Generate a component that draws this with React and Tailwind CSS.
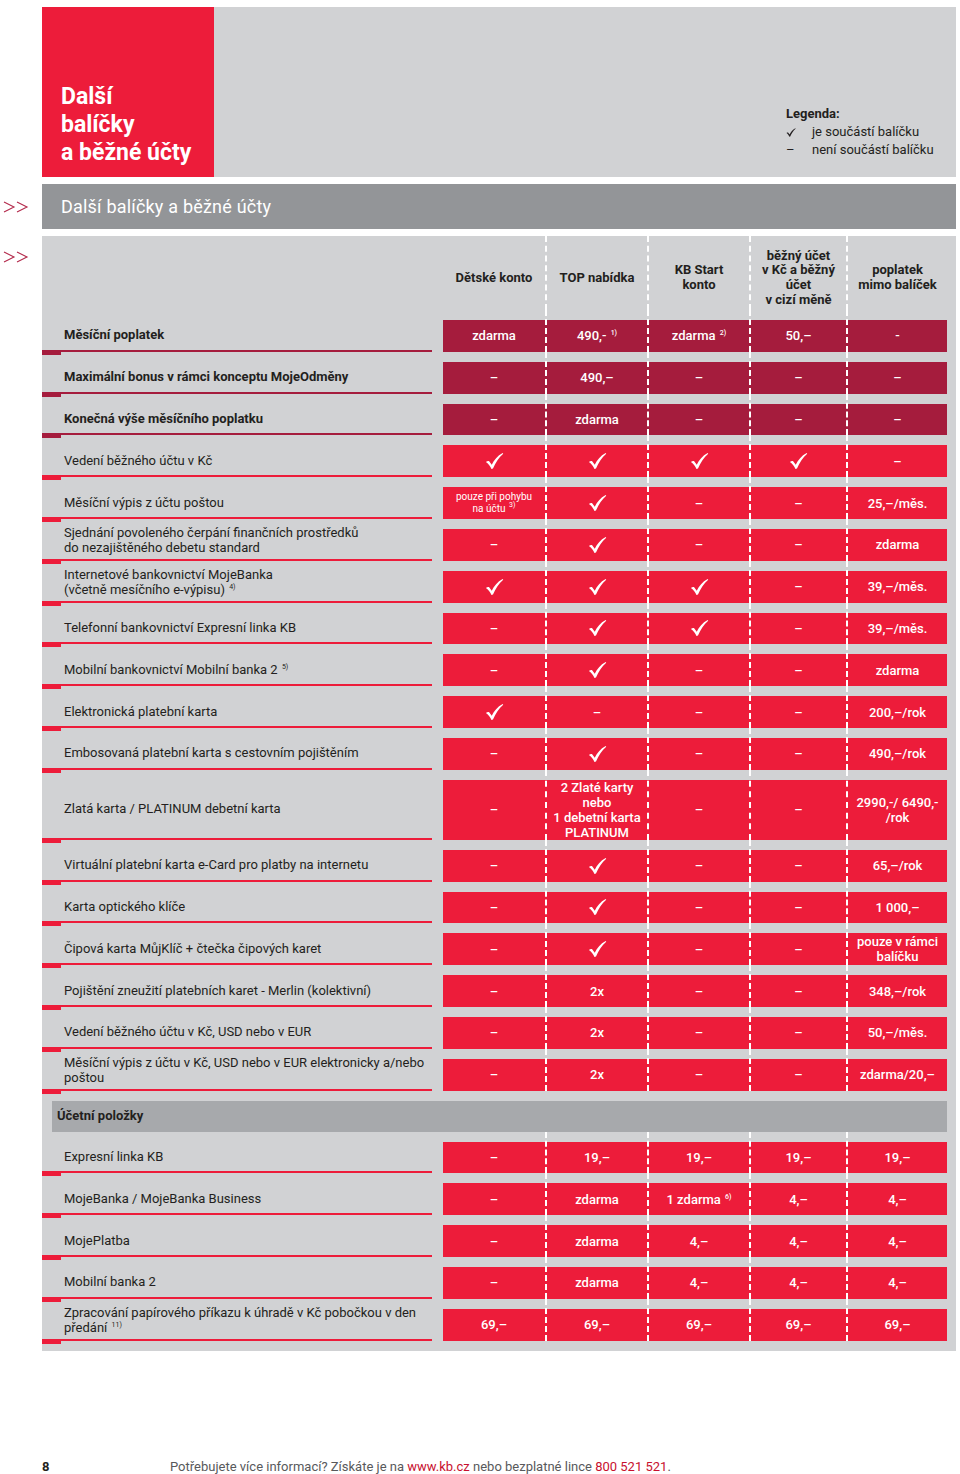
const DARK = "bg-[linear-gradient(to_bottom,transparent_10px,#a51c3d_10px)]";
const BRIGHT = "bg-[linear-gradient(to_bottom,transparent_10px,#ed1c3a_10px)]";

const Sup = ({ children }) => (
  <span className="text-[7px] leading-none ml-[1px] align-baseline relative -top-[5px]">{children}</span>
);

function Check({ className = "w-[19px] h-[18px]", color = "#ffffff" }) {
  return (
    <svg viewBox="0 0 20 18" className={className}>
      <path
        d="M1,10 C2.5,9 3.6,8.8 4.6,9.6 L7.1,13 C9.6,8 13,3.6 18.6,0.6 L19.2,1.3 C14.6,5.2 11.2,10.2 8.4,17 L6.8,17.3 C5.6,14.6 3.8,12 1,10 Z"
        fill={color}
      />
    </svg>
  );
}

function Chevrons() {
  return (
    <svg viewBox="0 0 26 12" className="w-[26px] h-[12px]">
      <polyline points="1,1 11,6 1,11" fill="none" stroke="#b3294b" strokeWidth="1.1" />
      <polyline points="14,1 24,6 14,11" fill="none" stroke="#b3294b" strokeWidth="1.1" />
    </svg>
  );
}

const V = "check";

const rows = [
  { label: "Měsíční poplatek", bold: true, dark: true, vals: ["zdarma", ["490,- ", "1)"], ["zdarma ", "2)"], "50,–", "-"] },
  { label: "Maximální bonus v rámci konceptu MojeOdměny", bold: true, dark: true, vals: ["–", "490,–", "–", "–", "–"] },
  { label: "Konečná výše měsíčního poplatku", bold: true, dark: true, vals: ["–", "zdarma", "–", "–", "–"] },
  { label: "Vedení běžného účtu v Kč", vals: [V, V, V, V, "–"] },
  { label: "Měsíční výpis z účtu poštou", vals: ["small", V, "–", "–", "25,–/měs."] },
  { label: "Sjednání povoleného čerpání finančních prostředků\ndo nezajištěného debetu standard", vals: ["–", V, "–", "–", "zdarma"] },
  { label: "Internetové bankovnictví MojeBanka\n(včetně mesíčního e-výpisu) ", sup: "4)", vals: [V, V, V, "–", "39,–/měs."] },
  { label: "Telefonní bankovnictví Expresní linka KB", vals: ["–", V, V, "–", "39,–/měs."] },
  { label: "Mobilní bankovnictví Mobilní banka 2 ", sup: "5)", vals: ["–", V, "–", "–", "zdarma"] },
  { label: "Elektronická platební karta", vals: [V, "–", "–", "–", "200,–/rok"] },
  { label: "Embosovaná platební karta s cestovním pojištěním", vals: ["–", V, "–", "–", "490,–/rok"] },
  { label: "Zlatá karta / PLATINUM debetní karta", tall: true, vals: ["–", "2 Zlaté karty\nnebo\n1 debetní karta\nPLATINUM", "–", "–", "2990,-/ 6490,-\n/rok"] },
  { label: "Virtuální platební karta e-Card pro platby na internetu", vals: ["–", V, "–", "–", "65,–/rok"] },
  { label: "Karta optického klíče", vals: ["–", V, "–", "–", "1 000,–"] },
  { label: "Čipová karta MůjKlíč + čtečka čipových karet", vals: ["–", V, "–", "–", "pouze v rámci\nbalíčku"] },
  { label: "Pojištění zneužití platebních karet - Merlin (kolektivní)", vals: ["–", "2x", "–", "–", "348,–/rok"] },
  { label: "Vedení běžného účtu v Kč, USD nebo v EUR", vals: ["–", "2x", "–", "–", "50,–/měs."] },
  { label: "Měsíční výpis z účtu v Kč, USD nebo v EUR elektronicky a/nebo\npoštou", vals: ["–", "2x", "–", "–", "zdarma/20,–"] },
];

const rows2 = [
  { label: "Expresní linka KB", vals: ["–", "19,–", "19,–", "19,–", "19,–"] },
  { label: "MojeBanka / MojeBanka Business", vals: ["–", "zdarma", ["1 zdarma ", "6)"], "4,–", "4,–"] },
  { label: "MojePlatba", vals: ["–", "zdarma", "4,–", "4,–", "4,–"] },
  { label: "Mobilní banka 2", vals: ["–", "zdarma", "4,–", "4,–", "4,–"] },
  { label: "Zpracování papírového příkazu k úhradě v Kč pobočkou v den\npředání ", sup: "11)", vals: ["69,–", "69,–", "69,–", "69,–", "69,–"] },
];

const GRID = "grid grid-cols-[102px_102px_102px_97px_101px]";

function CellValue({ v }) {
  if (v === V) return <Check />;
  if (v === "small")
    return (
      <div className="text-[10px] leading-[12px] font-normal">
        <div>pouze při pohybu</div>
        <div>
          na účtu <Sup>3)</Sup>
        </div>
      </div>
    );
  if (Array.isArray(v))
    return (
      <span>
        {v[0]}
        <Sup>{v[1]}</Sup>
      </span>
    );
  return <span className="whitespace-pre-line">{v}</span>;
}

function Row({ label, sup, vals, dark, tall, bold }) {
  const lines = label.split("\n");
  const multi = lines.length > 1;
  return (
    <div className={`flex ${tall ? "h-[70px]" : "h-[41.8px]"}`}>
      <div className="w-[390px] flex flex-col">
        <div
          className={`flex-1 flex flex-col justify-center pl-[22px] text-[13px] leading-[15px] text-[#231f20] ${
            multi ? "mt-[3px]" : "mt-[10px]"
          } ${bold ? "font-bold" : ""}`}
        >
          {lines.map((l, i) => (
            <div key={i}>
              {l}
              {sup && i === lines.length - 1 ? <Sup>{sup}</Sup> : null}
            </div>
          ))}
        </div>
        <div className="flex h-[2px] items-start">
          <div className={`w-[19px] h-[5px] shrink-0 ${dark ? "bg-[#a51c3d]" : "bg-[#ed1c3a]"}`} />
          <div className={`flex-1 h-[2px] ${dark ? "bg-[#a51c3d]" : "bg-[#ed1c3a]"}`} />
        </div>
      </div>
      <div className="w-[11px]" />
      <div className={GRID}>
        {vals.map((v, i) => (
          <div
            key={i}
            className={`flex flex-col ${dark ? DARK : BRIGHT} ${i ? "border-l-2 border-dashed border-white" : ""}`}
          >
            <div className="flex-1 mt-[10px] flex items-center justify-center text-center text-white text-[13px] leading-[15px] font-medium">
              <CellValue v={v} />
            </div>
          </div>
        ))}
      </div>
    </div>
  );
}

export default function App() {
  const heads = ["Dětské konto", "TOP nabídka", "KB Start\nkonto", "běžný účet\nv Kč a běžný\núčet\nv cizí měně", "poplatek\nmimo balíček"];

  return (
    <div className="w-[960px] h-[1474px] bg-white pt-[7px] font-['Roboto',sans-serif] text-[#231f20]">
      {/* title block */}
      <div className="flex h-[170px]">
        <div className="w-[42px]" />
        <div className="w-[172px] bg-[#ed1c3a] flex flex-col justify-end pl-[19px] pb-[10px]">
          <h1 className="text-white font-bold text-[23px] leading-[28px]">
            Další
            <br />
            balíčky
            <br />
            a běžné účty
          </h1>
        </div>
        <div className="w-[742px] bg-[#d1d2d4] flex justify-end items-end pb-[18px]">
          <div className="w-[170px] text-[13px] leading-[18px] text-[#231f20]">
            <div className="font-bold">Legenda:</div>
            <div className="flex items-center">
              <span className="w-[26px]">
                <Check className="w-[10px] h-[9px]" color="#231f20" />
              </span>
              je součástí balíčku
            </div>
            <div className="flex items-center">
              <span className="w-[26px]">–</span>
              není součástí balíčku
            </div>
          </div>
        </div>
      </div>

      {/* section bar */}
      <div className="flex h-[45px] mt-[7px]">
        <div className="w-[42px] flex items-center pl-[3px]">
          <Chevrons />
        </div>
        <div className="w-[914px] bg-[#939598] flex items-center pl-[19px] text-white text-[18px] tracking-[0.2px]">
          Další balíčky a běžné účty
        </div>
      </div>

      {/* table */}
      <div className="flex mt-[7px]">
        <div className="w-[42px] pl-[3px] pt-[15px]">
          <Chevrons />
        </div>
        <div className="w-[914px] bg-[#d1d2d4] pb-[10px]">
          <div className="flex h-[74px]">
            <div className="w-[401px]" />
            <div className={GRID}>
              {heads.map((h, i) => (
                <div
                  key={i}
                  className={`flex items-center justify-center pt-[10px] text-center font-bold text-[13px] leading-[14.7px] whitespace-pre-line ${
                    i ? "border-l-2 border-dashed border-white" : ""
                  }`}
                >
                  {h}
                </div>
              ))}
            </div>
          </div>

          {rows.map((r, i) => (
            <Row key={i} {...r} />
          ))}

          <div className="flex h-[41px] pt-[10px]">
            <div className="w-[10px]" />
            <div className="w-[895px] bg-[#a7a9ac] flex items-center pl-[5px] font-bold text-[13px]">
              Účetní položky
            </div>
          </div>

          {rows2.map((r, i) => (
            <Row key={i} {...r} />
          ))}
        </div>
      </div>

      {/* footer */}
      <div className="flex items-center mt-[106px] text-[13px]">
        <div className="w-[170px] shrink-0 pl-[42px] font-bold text-[#231f20]">8</div>
        <div className="text-[#58595b]">
          Potřebujete více informací? Získáte je na <span className="text-[#c8102e]">www.kb.cz</span> nebo bezplatné
          lince <span className="text-[#c8102e]">800 521 521</span>.
        </div>
      </div>
    </div>
  );
}
